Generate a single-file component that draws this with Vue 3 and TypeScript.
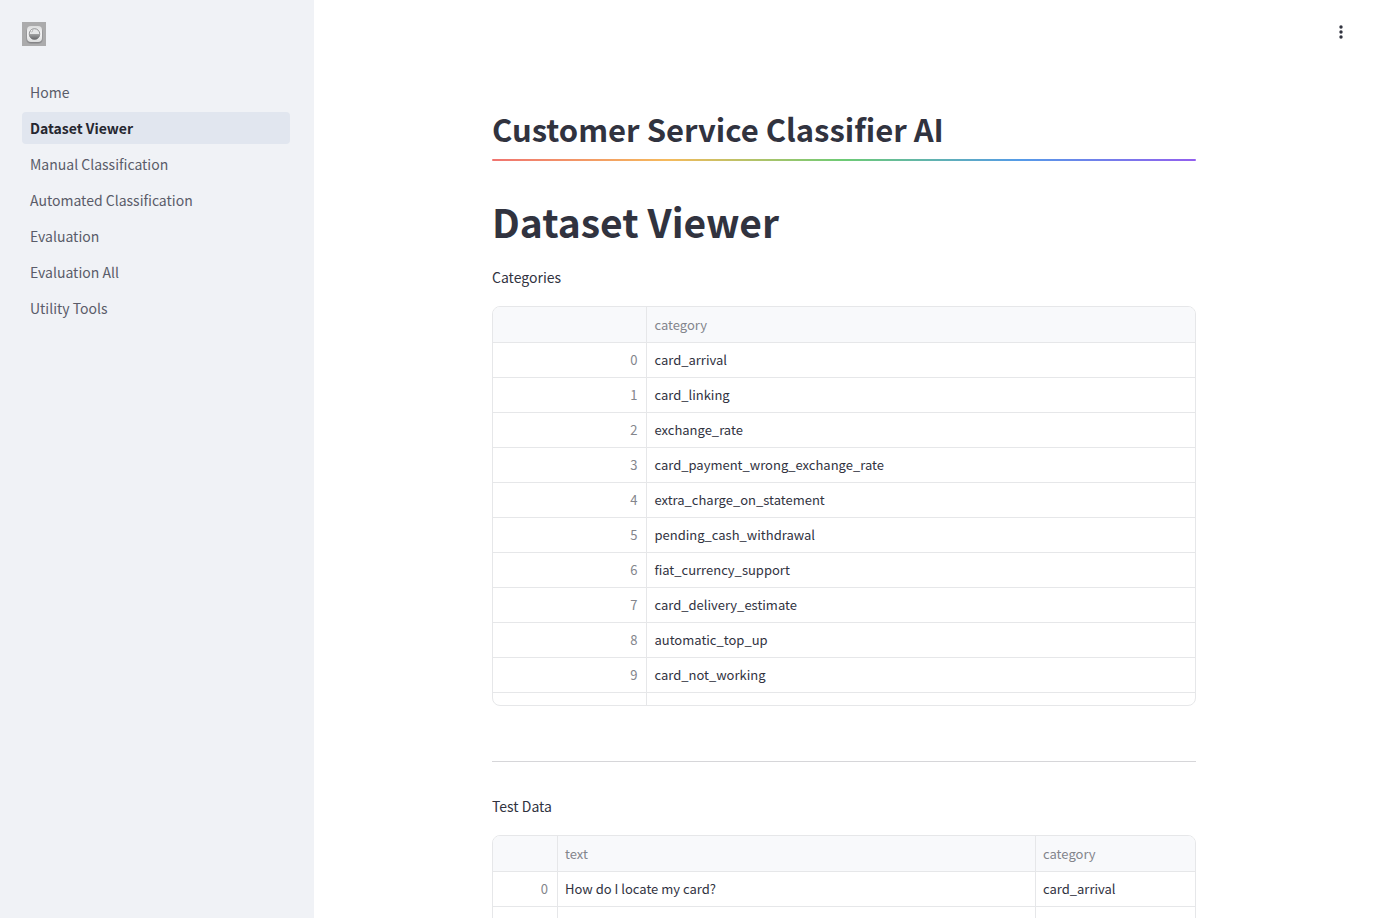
<script setup lang="ts">
import { ref } from 'vue'

interface Row {
  index: number
  cells: string[]
}

const pages: string[] = [
  'Home',
  'Dataset Viewer',
  'Manual Classification',
  'Automated Classification',
  'Evaluation',
  'Evaluation All',
  'Utility Tools',
]
const current = ref('Dataset Viewer')

const categories: Row[] = [
  'card_arrival',
  'card_linking',
  'exchange_rate',
  'card_payment_wrong_exchange_rate',
  'extra_charge_on_statement',
  'pending_cash_withdrawal',
  'fiat_currency_support',
  'card_delivery_estimate',
  'automatic_top_up',
  'card_not_working',
  'exchange_via_app',
].map((name, index) => ({ index, cells: [name] }))

const testData: Row[] = [
  { index: 0, cells: ['How do I locate my card?', 'card_arrival'] },
  { index: 1, cells: ['', ''] },
]
</script>

<template>
  <div class="app">
    <aside class="sidebar">
      <svg class="logo" viewBox="0 0 24 24" role="img" aria-label="Logo">
        <defs>
          <linearGradient id="tile" x1="0" y1="0" x2="0" y2="1">
            <stop offset="0" stop-color="#dcdddd" />
            <stop offset="0.5" stop-color="#f4f4f5" />
            <stop offset="1" stop-color="#dcdddd" />
          </linearGradient>
          <linearGradient id="liquid" x1="0" y1="0" x2="0" y2="1">
            <stop offset="0" stop-color="#a2a3a4" />
            <stop offset="1" stop-color="#66676a" />
          </linearGradient>
        </defs>
        <rect width="24" height="24" fill="#ababac" />
        <rect x="4" y="5" width="17" height="17" rx="5" fill="#98989a" />
        <rect x="5" y="5" width="15" height="16" rx="4" fill="#858587" />
        <rect x="5" y="4" width="15" height="16" rx="4" fill="url(#tile)" />
        <circle cx="12.5" cy="12" r="5.3" fill="#e6e7e8" stroke="#8a8b8d" stroke-width="0.9" />
        <path d="M7 12h11a5.5 5.5 0 0 1-11 0z" fill="url(#liquid)" />
        <circle cx="9.6" cy="8.8" r="1.1" fill="#fff" stroke="#8a8b8d" stroke-width="0.5" />
      </svg>
      <nav class="nav" aria-label="Pages">
        <a
          v-for="page in pages"
          :key="page"
          href="#"
          class="nav-link"
          :class="{ active: page === current }"
          :aria-current="page === current ? 'page' : undefined"
          @click.prevent="current = page"
        >{{ page }}</a>
      </nav>
    </aside>

    <main class="main">
      <header class="toolbar">
        <button class="menu" type="button" aria-label="Main menu">
          <svg viewBox="0 0 20 20" width="20" height="20" aria-hidden="true">
            <circle cx="10" cy="5" r="1.7" />
            <circle cx="10" cy="10" r="1.7" />
            <circle cx="10" cy="15" r="1.7" />
          </svg>
        </button>
      </header>

      <div class="content">
        <h2 class="title">Customer Service Classifier AI</h2>
        <div class="rainbow"></div>
        <h1 class="heading">Dataset Viewer</h1>

        <p class="label">Categories</p>
        <div class="frame">
          <table class="grid categories" aria-label="Categories">
            <thead>
              <tr><th class="index"></th><th>category</th></tr>
            </thead>
            <tbody>
              <tr v-for="row in categories" :key="row.index">
                <td class="index">{{ row.index }}</td>
                <td v-for="(cell, i) in row.cells" :key="i">{{ cell }}</td>
              </tr>
            </tbody>
          </table>
        </div>

        <hr class="divider" />

        <p class="label">Test Data</p>
        <div class="frame">
          <table class="grid test" aria-label="Test Data">
            <thead>
              <tr><th class="index"></th><th>text</th><th class="category">category</th></tr>
            </thead>
            <tbody>
              <tr v-for="row in testData" :key="row.index">
                <td class="index">{{ row.index }}</td>
                <td v-for="(cell, i) in row.cells" :key="i">{{ cell }}</td>
              </tr>
            </tbody>
          </table>
        </div>
      </div>
    </main>
  </div>
</template>

<style>
body {
  margin: 0;
}
</style>

<style scoped>
.app {
  display: flex;
  height: 100vh;
  overflow: hidden;
  background: #fff;
  color: #31333f;
  font-family: "Noto Sans CJK SC", "Noto Sans", sans-serif;
  font-size: 14px;
  line-height: 24px;
}

.sidebar {
  flex: 0 0 314px;
  box-sizing: border-box;
  padding: 22px 24px 0 22px;
  background: #f0f2f6;
}

.logo {
  display: block;
  width: 24px;
  height: 24px;
}

.nav {
  display: flex;
  flex-direction: column;
  gap: 4px;
  margin-top: 30px;
}

.nav-link {
  padding: 4px 8px;
  border-radius: 4px;
  color: #5a5c69;
  text-decoration: none;
}

.nav-link.active {
  background: #e1e6ef;
  color: #262730;
  font-weight: 700;
}

.main {
  flex: 1;
  min-width: 0;
  padding-right: 4px;
  overflow: hidden;
}

.toolbar {
  display: flex;
  justify-content: flex-end;
  padding: 22px 23px 0 0;
}

.menu {
  display: flex;
  padding: 0;
  border: 0;
  background: none;
  fill: #31333f;
  cursor: pointer;
}

.content {
  box-sizing: border-box;
  max-width: 736px;
  margin: 0 auto;
  padding: 65px 16px 0;
}

.title {
  margin: 0;
  font-size: 31px;
  font-weight: 700;
  line-height: 44px;
}

.rainbow {
  height: 2px;
  margin-top: 8px;
  border-radius: 2px;
  background: linear-gradient(to right, #f07470, #f5ba5c, #6dcb75, #559be8, #935fee);
}

.heading {
  margin: 34px 0 0;
  font-size: 39px;
  font-weight: 700;
  line-height: 52px;
}

.label {
  margin: 18px 0 17px;
}

.frame {
  box-sizing: border-box;
  max-height: 400px;
  overflow: hidden;
  border: 1px solid #e6e7e9;
  border-radius: 8px;
}

.grid {
  width: 100%;
  table-layout: fixed;
  border-collapse: separate;
  border-spacing: 0;
  font-size: 13px;
  line-height: 18px;
}

.grid th,
.grid td {
  box-sizing: border-box;
  height: 35px;
  padding: 0 9px 0 7px;
  border-right: 1px solid #e6e7e9;
  border-bottom: 1px solid #e6e7e9;
  text-align: left;
  white-space: nowrap;
}

.grid th {
  height: 36px;
  background: #f8f9fb;
  color: #83858c;
  font-weight: 400;
}

.grid th:last-child,
.grid td:last-child {
  border-right: 0;
}

.grid .index {
  text-align: right;
  color: #83858c;
}

.categories th.index {
  width: 22%;
}

.test th.index {
  width: 65px;
}

.test th.category {
  width: 159px;
}

.divider {
  height: 1px;
  margin: 55px 0 32px;
  border: 0;
  background: #d6d6d9;
}
</style>
